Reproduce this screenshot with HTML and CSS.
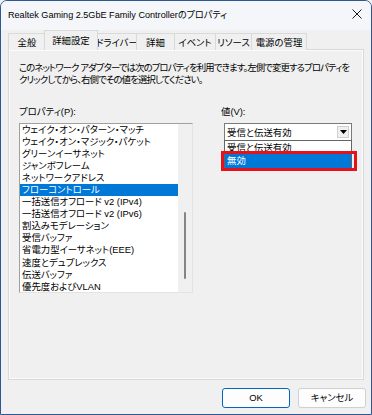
FILE: index.html
```html
<!DOCTYPE html>
<html lang="ja">
<head>
<meta charset="utf-8">
<link rel="stylesheet" href="styles.css">
</head>
<body>
<div class="window">
  <div class="titlebar">
    <span class="title">Realtek Gaming 2.5GbE Family Controllerのプロパティ</span>
    <svg class="close" width="10" height="10" viewBox="0 0 10 10"><path d="M0.5 0.5 L9.5 9.5 M9.5 0.5 L0.5 9.5" stroke="#1a1a1a" stroke-width="1" fill="none"/></svg>
  </div>
  <div class="tabs">
    <div class="tab w37">全般</div>
    <div class="tab active w50">詳細設定</div>
    <div class="tab w42">ドライバー</div>
    <div class="tab w38">詳細</div>
    <div class="tab w42">イベント</div>
    <div class="tab w36">リソース</div>
    <div class="tab w55">電源の管理</div>
  </div>
  <div class="panel">
    <p class="desc">このネットワーク アダプターでは次のプロパティを利用できます。左側で変更するプロパティを<br>クリックしてから、右側でその値を選択してください。</p>
    <div class="cols">
      <div class="col-left">
        <div class="label">プロパティ(P):</div>
        <div class="listbox">
          <div class="items">
            <div class="item">ウェイク・オン・パターン・マッチ</div>
            <div class="item">ウェイク・オン・マジック・パケット</div>
            <div class="item">グリーンイーサネット</div>
            <div class="item">ジャンボフレーム</div>
            <div class="item">ネットワークアドレス</div>
            <div class="item sel">フローコントロール</div>
            <div class="item">一括送信オフロード v2 (IPv4)</div>
            <div class="item">一括送信オフロード v2 (IPv6)</div>
            <div class="item">割込みモデレーション</div>
            <div class="item">受信バッファ</div>
            <div class="item">省電力型イーサネット(EEE)</div>
            <div class="item">速度とデュプレックス</div>
            <div class="item">伝送バッファ</div>
            <div class="item">優先度およびVLAN</div>
          </div>
          <div class="scrollbar"><div class="thumb"></div></div>
        </div>
      </div>
      <div class="col-right">
        <div class="label">値(V):</div>
        <div class="combo">
          <div class="combo-box">
            <span class="combo-text">受信と伝送有効</span>
            <span class="combo-btn"><svg width="7" height="4" viewBox="0 0 7 4"><path d="M0 0 H7 L3.5 4 Z" fill="#000"/></svg></span>
          </div>
          <div class="popup">
            <div class="popup-item">受信と伝送有効</div>
            <div class="popup-item hl">無効</div>
          </div>
          <div class="redbox"></div>
        </div>
      </div>
    </div>
  </div>
  <div class="buttons">
    <div class="btn default">OK</div>
    <div class="btn">キャンセル</div>
  </div>
</div>
</body>
</html>
```
FILE: styles.css
```css
* { box-sizing: border-box; }
html, body { margin: 0; padding: 0; }
body {
  width: 372px;
  height: 415px;
  overflow: hidden;
  background: #f0f0f0;
  font-family: "Liberation Sans", "Noto Sans CJK JP", sans-serif;
  font-size: 9.4px;
  color: #000;
  font-feature-settings: "palt";
}
.window {
  width: 372px;
  height: 415px;
  border: 1px solid #2c5893;
  border-radius: 7px 7px 0 0;
  background: #f0f0f0;
  display: flex;
  flex-direction: column;
  overflow: hidden;
}
.titlebar {
  height: 29px;
  flex: none;
  background: #f4f6fa;
  display: flex;
  align-items: center;
  justify-content: space-between;
  padding: 0 9px 4px 7px;
}
.title { font-size: 9.1px; }
.tabs {
  height: 20px;
  flex: none;
  display: flex;
  align-items: flex-end;
  padding-left: 7px;
  position: relative;
  z-index: 2;
}
.tab {
  height: 17px;
  border: 1px solid #d9d9d9;
  border-bottom: none;
  margin-left: -1px;
  background: #f0f0f0;
  text-align: center;
  line-height: 18px;
  white-space: nowrap;
}
.tab:first-child { margin-left: 0; }
.tab.active {
  height: 20px;
  margin-left: -2px;
  margin-right: -2px;
  background: #f0f0f0;
  line-height: 20px;
  position: relative;
  z-index: 3;
  padding-bottom: 1px;
}
.w37 { width: 38px; }
.w50 { width: 54px; }
.w42 { width: 42px; }
.w38 { width: 39px; }
.w36 { width: 37px; }
.w55 { width: 56px; }
.panel {
  margin: -1px 7px 0 7px;
  height: 331px;
  flex: none;
  border: 1px solid #d9d9d9;
  box-shadow: inset 0 0 0 1px #fbfbfb;
  background: #f0f0f0;
  padding: 12px 10px 0 10px;
}
.desc {
  margin: 0;
  line-height: 12px;
  white-space: nowrap;
  letter-spacing: -0.88px;
}
.cols {
  margin-top: 20px;
  display: grid;
  grid-template-columns: 174px 137px;
  column-gap: 28px;
}
.label { line-height: 12px; height: 12px; }
.listbox {
  margin-top: 5px;
  height: 170px;
  border: 1px solid #a0a0a0;
  border-right-color: #e3e3e3;
  border-bottom-color: #e3e3e3;
  background: #fff;
  display: flex;
  overflow: hidden;
}
.items { flex: 1; overflow: hidden; }
.item {
  height: 12.05px;
  line-height: 12.05px;
  padding-left: 2px;
  white-space: nowrap;
}
.item.sel { background: #0078d7; color: #fff; }
.scrollbar {
  width: 14px;
  flex: none;
  background: #f0f0f0;
  position: relative;
}
.thumb {
  position: absolute;
  left: 6px;
  top: 88px;
  width: 2px;
  height: 67px;
  border-radius: 1px;
  background: #858585;
}
.combo {
  position: relative;
  margin-top: 5px;
  margin-left: 3px;
  width: 128px;
}
.combo-box {
  height: 18px;
  border: 1px solid #7a7a7a;
  background: #fff;
  display: flex;
  align-items: center;
  justify-content: space-between;
  padding-left: 2px;
}
.combo-btn {
  width: 12px;
  height: 12px;
  margin-right: 2px;
  background: #f0f0f0;
  border: 1px solid #cfcfcf;
  display: flex;
  align-items: center;
  justify-content: center;
}
.popup {
  position: absolute;
  left: 0;
  top: 17px;
  width: 128px;
  height: 29px;
  border: 1px solid #646464;
  background: #fff;
  overflow: hidden;
}
.popup-item {
  height: 13px;
  line-height: 13px;
  padding-left: 2px;
  white-space: nowrap;
}
.popup-item.hl {
  height: 14px;
  line-height: 14px;
  background: #0078d7;
  color: #fff;
}
.redbox {
  position: absolute;
  left: -3px;
  top: 28px;
  width: 136px;
  height: 20px;
  border: 3px solid #e5121c;
}
.buttons {
  flex: 1;
  display: flex;
  justify-content: flex-end;
  align-items: flex-start;
  gap: 8px;
  padding: 8px 5px 0 0;
}
.btn {
  width: 68px;
  height: 20px;
  border: 1px solid #d0d0d0;
  border-radius: 3px;
  background: #fdfdfd;
  text-align: center;
  line-height: 18px;
}
.btn.default { border-color: #0067c0; }
```
